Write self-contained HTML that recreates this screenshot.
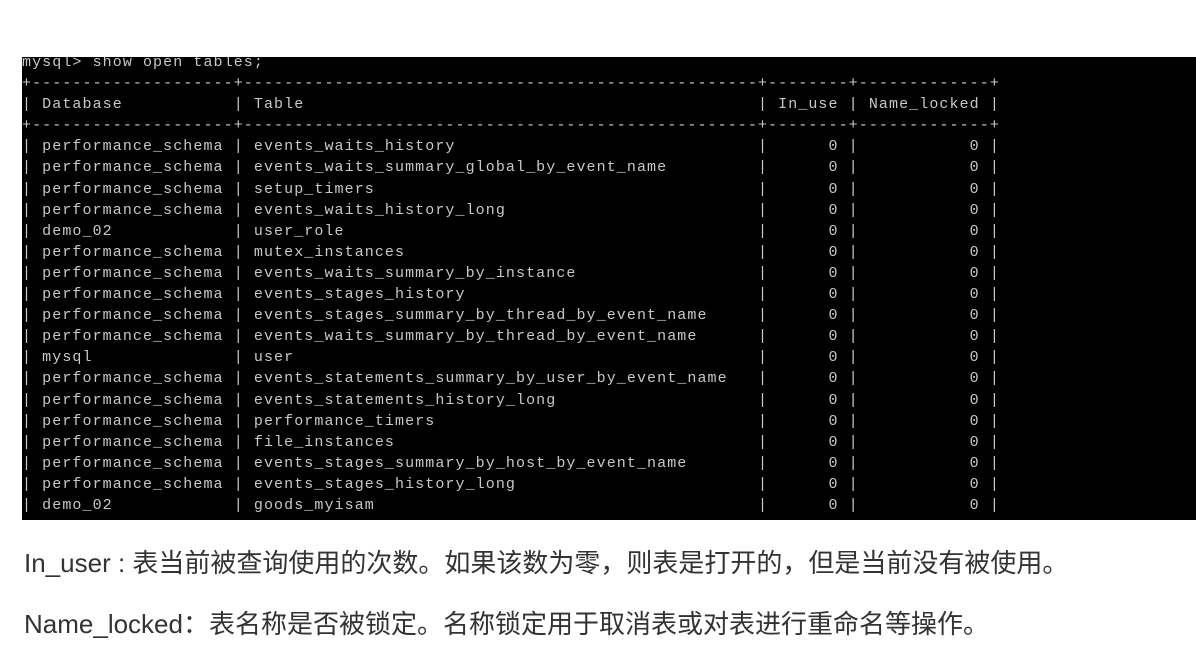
<!DOCTYPE html>
<html><head><meta charset="utf-8"><style>
html,body{margin:0;padding:0;background:#fff;width:1196px;height:661px;overflow:hidden}
.term{position:absolute;left:22px;top:57px;width:1174px;height:463px;background:#000;overflow:hidden}
pre{position:absolute;left:0px;top:-5px;margin:0;font-family:"Liberation Mono",monospace;font-size:15px;letter-spacing:1.08px;line-height:21.1px;color:#c8c8c8}
.t{position:absolute;left:24px;font-family:"Liberation Sans","Noto Sans CJK SC",sans-serif;font-size:26px;color:#333;white-space:nowrap}
</style></head><body>
<div class="term"><pre>mysql&gt; show open tables;
+--------------------+---------------------------------------------------+--------+-------------+
| Database           | Table                                             | In_use | Name_locked |
+--------------------+---------------------------------------------------+--------+-------------+
| performance_schema | events_waits_history                              |      0 |           0 |
| performance_schema | events_waits_summary_global_by_event_name         |      0 |           0 |
| performance_schema | setup_timers                                      |      0 |           0 |
| performance_schema | events_waits_history_long                         |      0 |           0 |
| demo_02            | user_role                                         |      0 |           0 |
| performance_schema | mutex_instances                                   |      0 |           0 |
| performance_schema | events_waits_summary_by_instance                  |      0 |           0 |
| performance_schema | events_stages_history                             |      0 |           0 |
| performance_schema | events_stages_summary_by_thread_by_event_name     |      0 |           0 |
| performance_schema | events_waits_summary_by_thread_by_event_name      |      0 |           0 |
| mysql              | user                                              |      0 |           0 |
| performance_schema | events_statements_summary_by_user_by_event_name   |      0 |           0 |
| performance_schema | events_statements_history_long                    |      0 |           0 |
| performance_schema | performance_timers                                |      0 |           0 |
| performance_schema | file_instances                                    |      0 |           0 |
| performance_schema | events_stages_summary_by_host_by_event_name       |      0 |           0 |
| performance_schema | events_stages_history_long                        |      0 |           0 |
| demo_02            | goods_myisam                                      |      0 |           0 |
</pre></div>
<div class="t" style="top:543px">In_user : 表当前被查询使用的次数。如果该数为零，则表是打开的，但是当前没有被使用。</div>
<div class="t" style="top:604px">Name_locked：表名称是否被锁定。名称锁定用于取消表或对表进行重命名等操作。</div>
</body></html>
